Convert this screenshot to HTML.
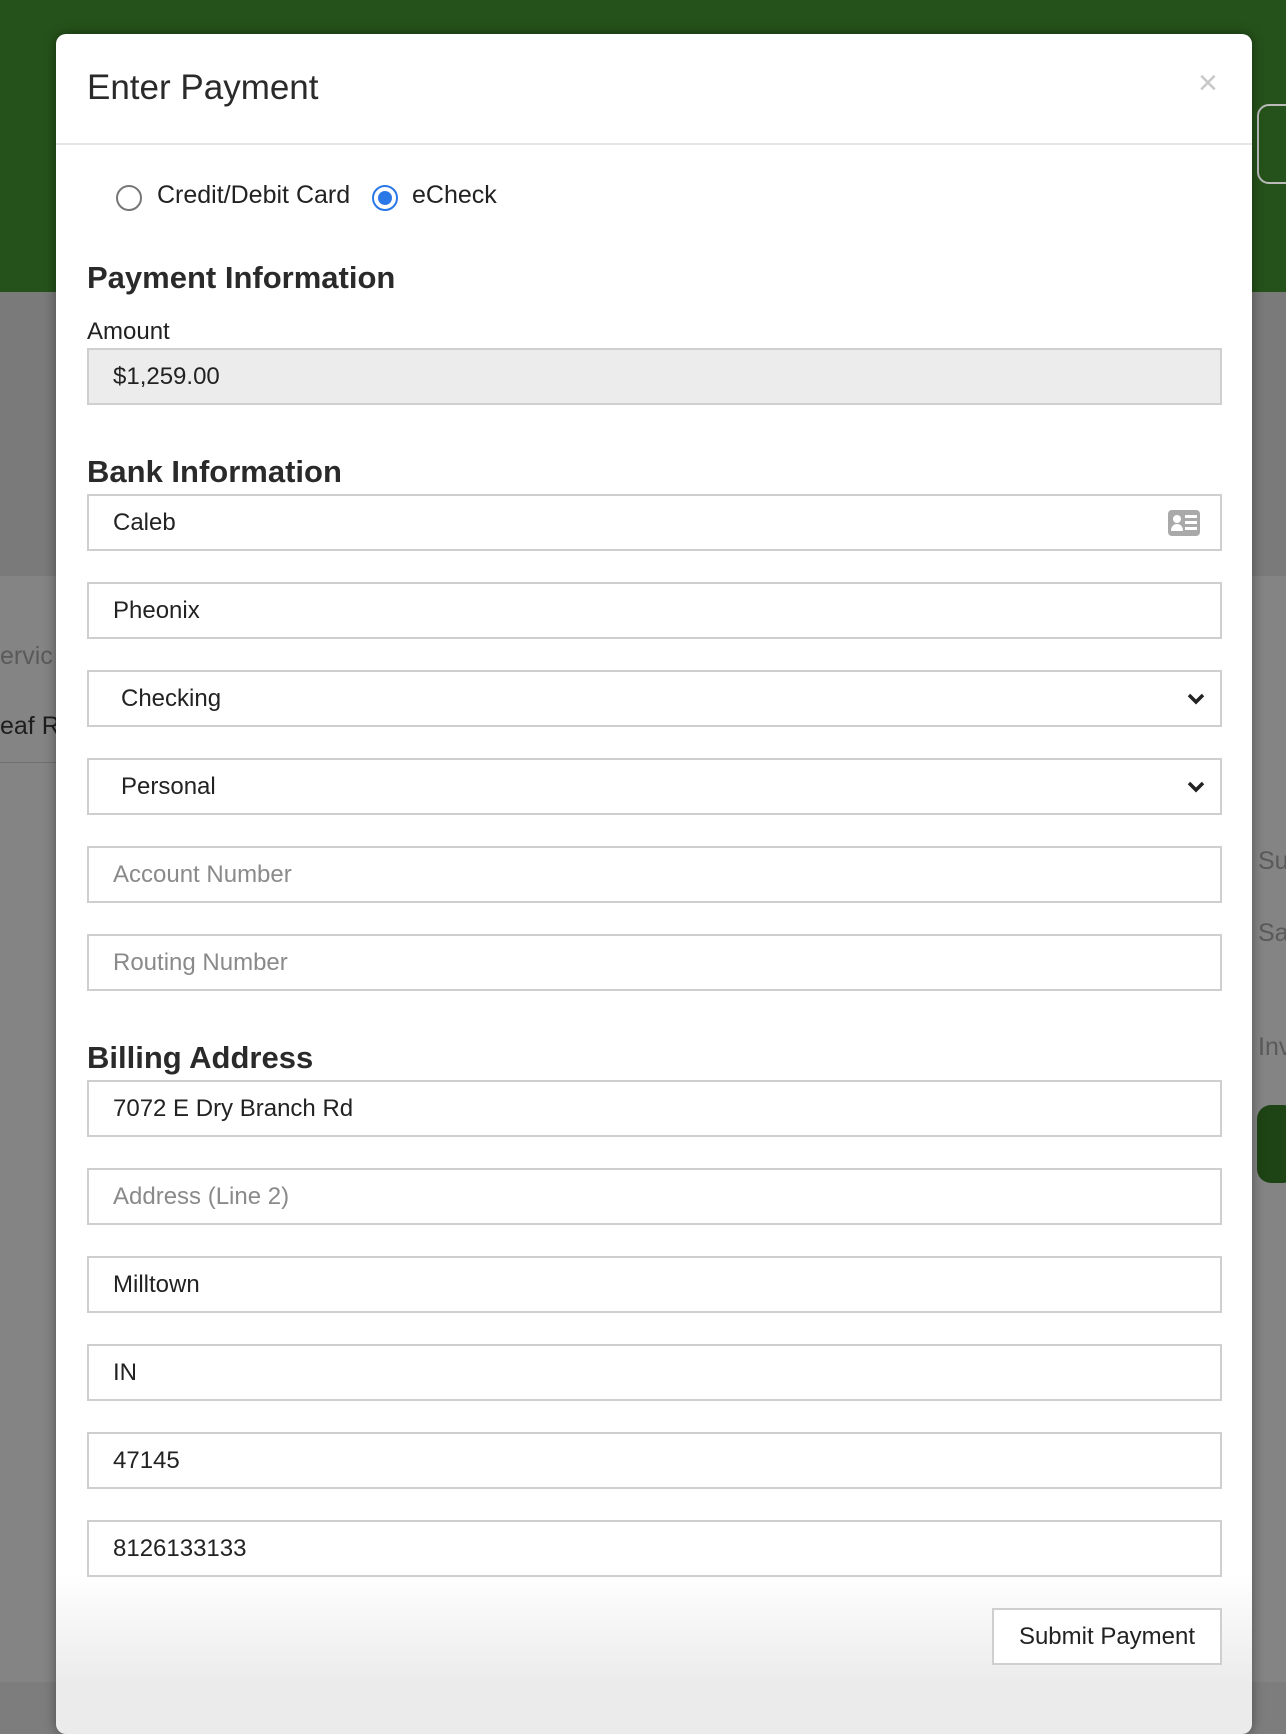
<!DOCTYPE html>
<html><head><meta charset="utf-8"><style>
*{box-sizing:border-box;margin:0;padding:0}
body{width:1286px;height:1682px;overflow:hidden;position:relative;font-family:"Liberation Sans",sans-serif;background:#7d7d7d;color:#222}
.a{position:absolute}
.inp{position:absolute;left:87px;width:1135px;height:57px;border:2px solid #cfcfcf;background:#fff;font-size:24px;padding-left:24px;line-height:53px;color:#222}
.ph{color:#8a8a8a}
h2{position:absolute;left:87px;font-size:31px;font-weight:bold;color:#2a2a2a}
.chev{position:absolute;right:14px;top:20px}
</style></head><body>
<div class="a" style="left:0;top:0;width:1286px;height:292px;background:#25521a"></div>
<div class="a" style="left:0;top:292px;width:1286px;height:284px;background:#7a7a7a"></div>
<div class="a" style="left:0;top:576px;width:1286px;height:1106px;background:#848484"></div>
<div class="a" style="left:0;top:762px;width:60px;height:1px;background:#707070"></div>
<div class="a" style="left:0;top:642px;font-size:25px;color:#5a5a5a">ervic</div>
<div class="a" style="left:0;top:712px;font-size:25px;color:#1e1e1e">eaf R</div>
<div class="a" style="left:1257px;top:104px;width:40px;height:80px;border:2px solid #bbb;border-radius:12px"></div>
<div class="a" style="left:1258px;top:847px;font-size:25px;color:#5a5a5a">Su</div>
<div class="a" style="left:1258px;top:919px;font-size:25px;color:#5a5a5a">Sa</div>
<div class="a" style="left:1258px;top:1033px;font-size:25px;color:#5a5a5a">Inv</div>
<div class="a" style="left:1257px;top:1105px;width:40px;height:78px;background:#1e4314;border-radius:14px"></div>

<div class="a" style="left:56px;top:34px;width:1196px;height:1700px;background:linear-gradient(#fff 1540px,#ebebeb 1650px);border-radius:10px;box-shadow:0 0 12px rgba(0,0,0,.4)"></div>
<div class="a" style="left:87px;top:68px;font-size:35px;color:#2a2a2a">Enter Payment</div>
<div class="a" style="left:1198px;top:64px;font-size:34px;color:#c8c8c8">×</div>
<div class="a" style="left:56px;top:143px;width:1196px;height:2px;background:#e6e6e6"></div>

<div class="a" style="left:116px;top:185px;width:26px;height:26px;border:2px solid #777;border-radius:50%"></div>
<div class="a" style="left:157px;top:181px;font-size:25px">Credit/Debit Card</div>
<div class="a" style="left:372px;top:185px;width:26px;height:26px;border:2px solid #2a78e8;border-radius:50%"><div style="margin:4px;width:14px;height:14px;border-radius:50%;background:#2a78e8"></div></div>
<div class="a" style="left:412px;top:181px;font-size:25px">eCheck</div>

<h2 style="top:260px">Payment Information</h2>
<div class="a" style="left:87px;top:318px;font-size:24px">Amount</div>
<div class="inp" style="top:348px;background:#ececec">$1,259.00</div>

<h2 style="top:454px">Bank Information</h2>
<div class="inp" style="top:494px">Caleb
<svg class="a" style="right:20px;top:14px" width="32" height="26" viewBox="0 0 32 26"><rect x="0" y="0" width="32" height="26" rx="4" fill="#a9a9a9"/><circle cx="9" cy="9" r="4" fill="#fff"/><path d="M3 21c0-5 3-7 6-7s6 2 6 7z" fill="#fff"/><rect x="17" y="5" width="12" height="3" fill="#fff"/><rect x="17" y="11" width="12" height="3" fill="#fff"/><rect x="17" y="17" width="12" height="3" fill="#fff"/></svg></div>
<div class="inp" style="top:582px">Pheonix</div>
<div class="inp" style="top:670px;padding-left:32px">Checking<svg class="chev" width="20" height="14" viewBox="0 0 20 14"><path d="M3 3l7 7 7-7" stroke="#222" stroke-width="3.5" fill="none"/></svg></div>
<div class="inp" style="top:758px;padding-left:32px">Personal<svg class="chev" width="20" height="14" viewBox="0 0 20 14"><path d="M3 3l7 7 7-7" stroke="#222" stroke-width="3.5" fill="none"/></svg></div>
<div class="inp ph" style="top:846px">Account Number</div>
<div class="inp ph" style="top:934px">Routing Number</div>

<h2 style="top:1040px">Billing Address</h2>
<div class="inp" style="top:1080px">7072 E Dry Branch Rd</div>
<div class="inp ph" style="top:1168px">Address (Line 2)</div>
<div class="inp" style="top:1256px">Milltown</div>
<div class="inp" style="top:1344px">IN</div>
<div class="inp" style="top:1432px">47145</div>
<div class="inp" style="top:1520px">8126133133</div>

<div class="a" style="left:992px;top:1608px;width:230px;height:57px;border:2px solid #cfcfcf;background:#fff;font-size:24px;line-height:53px;text-align:center">Submit Payment</div>
</body></html>
